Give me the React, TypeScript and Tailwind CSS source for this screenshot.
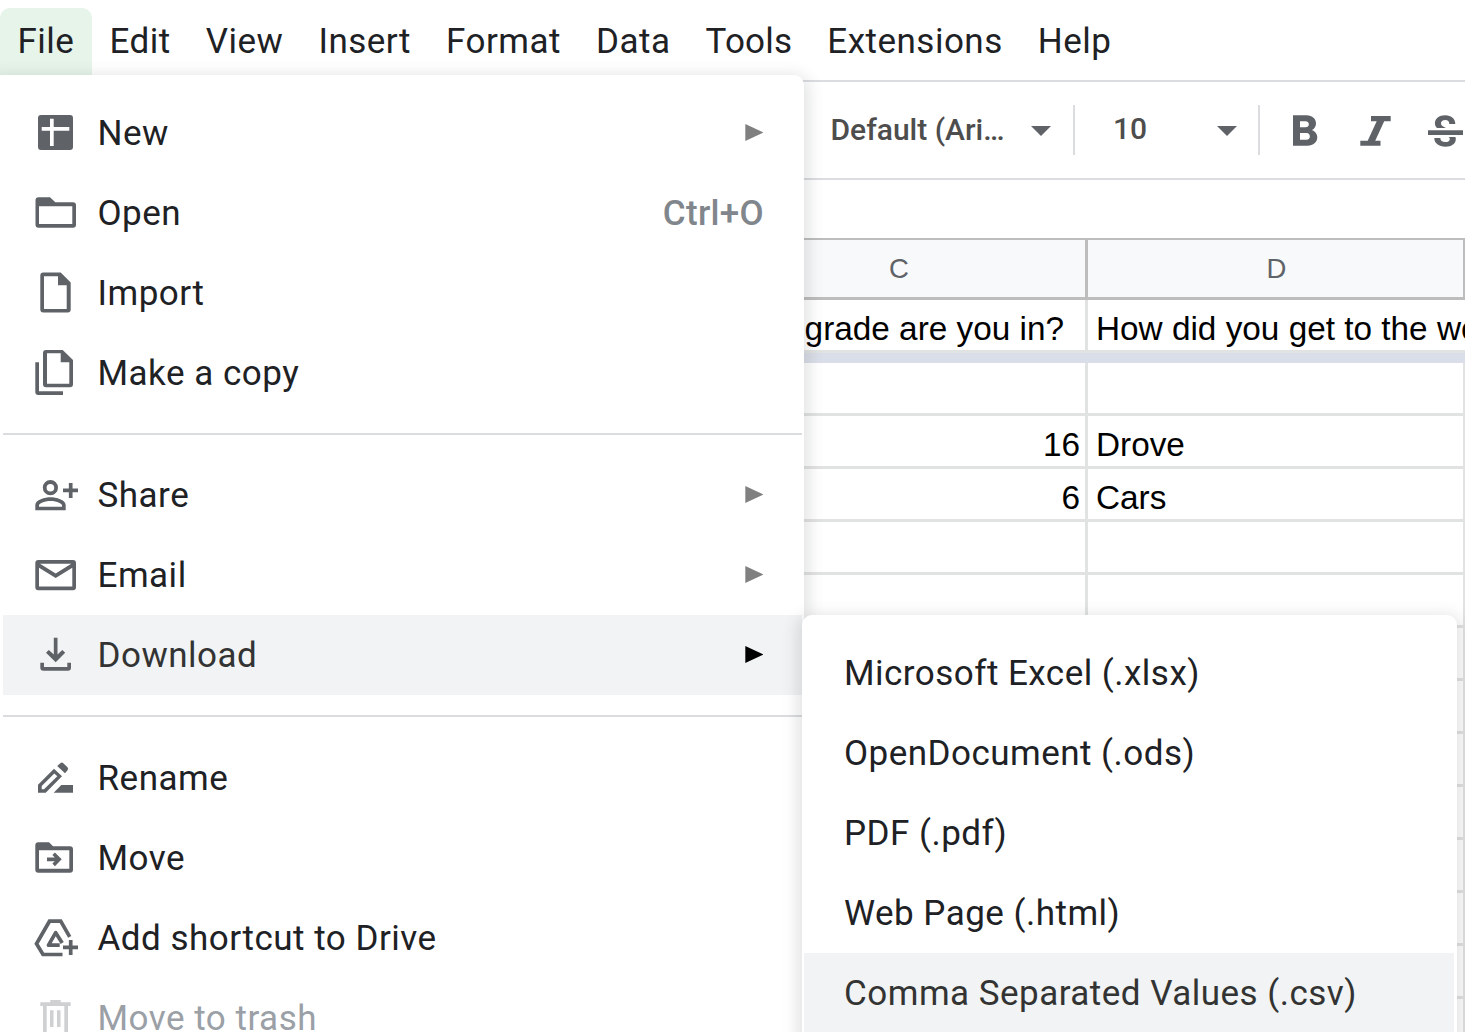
import React from "react";

const INK = "#5f6368";

type IconProps = { children: React.ReactNode; color?: string };

function Icon({ children, color = INK }: IconProps) {
  return (
    <svg width="48" height="48" viewBox="0 0 48 48" fill={color} stroke="none" className="shrink-0">
      {children}
    </svg>
  );
}

const icons = {
  sheet: (
    <Icon>
      <path fillRule="evenodd" d="M9 6H38a3 3 0 0 1 3 3V38a3 3 0 0 1-3 3H9a3 3 0 0 1-3-3V9a3 3 0 0 1 3-3zM18 9.7V18H9.7v3.7H18V37h3.7V21.7H37.3V18H21.7V9.7z" />
    </Icon>
  ),
  folder: (
    <Icon>
      <path fillRule="evenodd" d="M6.5 8.3H18L23.3 13.3H41a3 3 0 0 1 3 3V35.7a3 3 0 0 1-3 3H6.5a3 3 0 0 1-3-3V11.3a3 3 0 0 1 3-3zM7 17.3V35H40.3V17.3z" />
    </Icon>
  ),
  file: (
    <Icon>
      <path fillRule="evenodd" d="M11.3 3.6H28.7L38.7 13.6V40.6a3 3 0 0 1-3 3H11.3a3 3 0 0 1-3-3V6.6a3 3 0 0 1 3-3zM12 7.3V40H34.7V16.3H26V7.3z" />
    </Icon>
  ),
  copy: (
    <Icon>
      <path fillRule="evenodd" d="M14 1H30.7L41 11V35.3a3 3 0 0 1-3 3H14a3 3 0 0 1-3-3V4a3 3 0 0 1 3-3zM15 4.3V34.7H37.3V13.3H28.7V4.3z" />
      <path d="M3.3 13.3H7V42.3H31V46H6.3a3 3 0 0 1-3-3z" />
    </Icon>
  ),
  share: (
    <Icon>
      <circle cx="18.4" cy="16.7" r="5.7" fill="none" stroke={INK} strokeWidth="3.8" />
      <path fillRule="evenodd" d="M3.3 39.3V34C3.3 28.8 13 26.3 18.5 26.3S33.7 28.8 33.7 34V39.3zM7 35.7H30V34.3C30 32 23 30 18.5 30S7 32 7 34.3z" />
      <path d="M31 19.3H46M38.7 12V27" stroke={INK} strokeWidth="3.7" />
    </Icon>
  ),
  mail: (
    <Icon>
      <path fillRule="evenodd" d="M6.3 9H41a3 3 0 0 1 3 3V36.3a3 3 0 0 1-3 3H6.3a3 3 0 0 1-3-3V12a3 3 0 0 1 3-3zM7 16.8V35.6H40.3V16.8L23.7 27zM8 12.7L23.7 22.6L39.3 12.7z" />
    </Icon>
  ),
  download: (
    <Icon>
      <path d="M21.8 6.7H25.5V23.5L30.3 19L33.2 21.8L23.7 31.2L14 21.8L16.8 19L21.8 23.5z" />
      <path d="M8.3 31.7H12V36H35.3V31.7H39V36.7a3 3 0 0 1-3 3H11.3a3 3 0 0 1-3-3z" />
    </Icon>
  ),
  rename: (
    <Icon>
      <path fillRule="evenodd" d="M6 38.7V30.7L22 14.7L30 22.3L13.7 38.7zM9.7 35.3H12L25.3 22.3L22.3 19.5L9.7 32.1z" />
      <path d="M25.2 12L28.3 9.2Q29.8 8 31.3 9.2L35.5 13.3Q36.8 14.7 35.5 16.2L33 19.3z" />
      <path d="M21.7 38.7L29.3 31H41V38.7z" />
    </Icon>
  ),
  move: (
    <Icon>
      <path fillRule="evenodd" d="M6.3 8.3H17L21 12.3H38a3 3 0 0 1 3 3V35.7a3 3 0 0 1-3 3H6.3a3 3 0 0 1-3-3V11.3a3 3 0 0 1 3-3zM7 16.3V34.7H37.3V16.3z" />
      <path d="M15 23.5H22.8L20.4 21.1L22.9 18.4L29.7 25.3L22.9 32.2L20.4 29.6L22.8 27.2H15z" />
    </Icon>
  ),
  drive: (
    <Icon>
      <g fill="none" stroke={INK} strokeWidth="3.7">
        <path d="M30.5 40.5H11L4.5 29.7L17.5 7.2H28.7L37.7 22.8" />
        <path d="M27.7 31.2H16.5L23.7 18.7L30.2 29" strokeLinejoin="round" />
        <path d="M31 33.3H46M38.7 26V41" />
      </g>
    </Icon>
  ),
  trash: (
    <Icon color="#cfd0d2">
      <path fillRule="evenodd" d="M18.3 6H28.7V8.3H38.7V12H36V42H11V12H8.3V8.3H18.3zM14.7 12V38.5H32.3V12z" />
      <path d="M18 16.3H21.5V33H18zM25 16.3H28.5V33H25z" />
    </Icon>
  ),
};

function Row({ icon, label, shortcut, arrow, active, disabled }: {
  icon: React.ReactNode; label: string; shortcut?: string; arrow?: boolean; active?: boolean; disabled?: boolean;
}) {
  return (
    <div className={`ml-[3px] mr-0.5 flex h-20 items-center pl-[29px] pr-[39px] ${active ? "bg-[#f1f3f4] text-[#333]" : disabled ? "text-[#9aa0a6]" : "text-[#202124]"}`}>
      {icon}
      <span className="ml-[17.5px] flex-1 whitespace-nowrap">{label}</span>
      {shortcut && <span className="-mr-px font-medium tracking-[0.3px] text-[#80868b]">{shortcut}</span>}
      {arrow && (
        <svg width="18" height="18" viewBox="0 0 18 18" fill={active ? "#000" : "#808080"} className="-translate-y-[0.5px]">
          <path d="M.3 .5L18.300 9L.3 17.500z" />
        </svg>
      )}
    </div>
  );
}

function Caret() {
  return (
    <svg width="20" height="10" viewBox="0 0 20 10" fill={INK} className="mt-0.5 shrink-0">
      <path d="M0 0H20L10 10z" />
    </svg>
  );
}

function SheetRow({ c, d }: { c?: string; d?: string }) {
  return (
    <div className="flex h-[53px] shrink-0 border-b-[3px] border-[#e1e3e2]">
      <div className="w-[1088px] shrink-0 border-r-[3px] border-[#e1e3e2] pr-[5px] pt-[7px] text-right">{c}</div>
      <div className="w-[378px] shrink-0 border-r-[3px] border-[#e1e3e2] pl-2 pt-[7px]">{d}</div>
    </div>
  );
}

const menus = ["Edit", "View", "Insert", "Format", "Data"];
const formats = ["Microsoft Excel (.xlsx)", "OpenDocument (.ods)", "PDF (.pdf)", "Web Page (.html)"];

export default function App() {
  return (
    <div className="relative flex h-[1032px] w-[1465px] flex-col overflow-hidden bg-white font-[Roboto,sans-serif]">
      <nav className="flex h-20 shrink-0 pt-2 text-[35px] leading-[68px] tracking-[0.5px] text-[#202124]">
        <div className="rounded-t-[10px] bg-[#e6f4ea] px-[17.5px]">File</div>
        {menus.map((m) => (
          <div key={m} className="px-[17.5px]">{m}</div>
        ))}
        <div className="px-[17.5px] tracking-[0.2px]">Tools</div>
        <div className="px-[17.5px]">Extensions</div>
        <div className="px-[17.5px]">Help</div>
      </nav>
      <div className="flex h-[100px] shrink-0 items-center border-y-2 border-[#dadce0] pl-[830.5px] text-[30px] font-medium text-[#4d4d4d]">
        <span className="mb-0.5 w-[200px] whitespace-nowrap">Default (Ari…</span>
        <Caret />
        <div className="ml-[22.5px] h-[50px] w-0.5 bg-[#dadce0]" />
        <span className="mb-1 ml-[38px] w-[104px]">10</span>
        <Caret />
        <div className="ml-[21px] h-[50px] w-0.5 bg-[#dadce0]" />
        <svg width="205" height="40" viewBox="1260 110 205 40" fill={INK} className="shrink-0">
          <path fillRule="evenodd" d="M1293 115.3H1306.5C1312.5 115.3 1316 119 1316 123.4C1316 126.3 1314.5 128.6 1312 130C1315.300 131.300 1317.300 134 1317.300 137.300C1317.300 142.300 1313.300 145.700 1307.500 145.700H1293zM1300 121.200V127.300H1305.500C1310 127.300 1310 121.200 1305.500 121.200zM1300 133V139.800H1306.500C1311 139.800 1311 133 1306.500 133z" />
          <path d="M1371 116H1390.700V121.200H1384.200L1375.200 140.800H1380.500V145.700H1360.300V140.800H1367.700L1376.700 121.200H1371z" />
          <path d="M1428 130.300H1463V135H1428z" />
          <path d="M1434.900 123.500C1434.900 118.500 1439 115.300 1445.300 115.300C1451.500 115.300 1455.300 118.800 1455.300 124H1449.300C1449.300 121.500 1448 120 1445.300 120C1442.500 120 1441 121.400 1441 123.500C1441 125.300 1442.300 126.500 1446 127.900H1437C1435.700 126.700 1434.900 125.300 1434.900 123.500z" />
          <path d="M1434.300 138H1440.300C1440.300 140.700 1442.200 142 1445.300 142C1448.300 142 1449.800 140.800 1449.800 138.900C1449.800 138 1449.500 137.400 1448.500 136.900H1455.400C1455.700 137.600 1455.800 138.300 1455.800 139C1455.800 143.700 1451.800 146.700 1445.500 146.700C1438.800 146.700 1434.300 143.400 1434.300 138z" />
        </svg>
      </div>
      <div className="h-[58px] shrink-0" />
      <div className="flex h-[62px] shrink-0 border-b-[3px] border-t-2 border-[#bdbdbd] bg-[#f8f9fa] text-center font-['Liberation_Sans',Arial,sans-serif] text-[27.5px] leading-[57px] text-[#5f6368]">
        <div className="w-[1088px] shrink-0 border-r-[3px] border-[#bdbdbd] pl-[713px]">C</div>
        <div className="w-[378px] shrink-0 border-r-[3px] border-[#bdbdbd] pl-0.5">D</div>
      </div>
      <div className="flex flex-col whitespace-nowrap font-['Liberation_Sans',Arial,sans-serif] text-[33.33px] leading-[44px] text-black">
        <div className="flex h-[53px] shrink-0 border-b-[3px] border-[#e1e3e2]">
          <div className="w-[1088px] shrink-0 border-r-[3px] border-[#e1e3e2] pr-[21px] pt-[7px] text-right">What grade are you in?</div>
          <div className="w-[378px] shrink-0 pl-2 pt-[7px]">How did you get to the wo</div>
        </div>
        <div className="h-2.5 shrink-0 bg-[#dadee8]" />
        <SheetRow />
        <SheetRow c="16" d="Drove" />
        <SheetRow c="6" d="Cars" />
        {Array.from({ length: 10 }, (_, i) => (
          <SheetRow key={i} />
        ))}
      </div>

      <div className="absolute -left-2 top-[75px] h-[1000px] w-[812px] rounded-[10px] bg-white pl-2 pt-[18px] text-[35px] leading-none tracking-[0.5px] shadow-[0_5px_15px_5px_rgba(60,64,67,0.15)]">
        <Row icon={icons.sheet} label="New" arrow />
        <Row icon={icons.folder} label="Open" shortcut="Ctrl+O" />
        <Row icon={icons.file} label="Import" />
        <Row icon={icons.copy} label="Make a copy" />
        <div className="mb-5 ml-[3px] mr-0.5 mt-5 h-0.5 bg-[#dadce0]" />
        <Row icon={icons.share} label="Share" arrow />
        <Row icon={icons.mail} label="Email" arrow />
        <Row icon={icons.download} label="Download" arrow active />
        <div className="mb-[21px] ml-[3px] mr-0.5 mt-5 h-0.5 bg-[#dadce0]" />
        <Row icon={icons.rename} label="Rename" />
        <Row icon={icons.move} label="Move" />
        <Row icon={icons.drive} label="Add shortcut to Drive" />
        <Row icon={icons.trash} label="Move to trash" disabled />
      </div>

      <div className="absolute left-[802px] top-[615px] h-[500px] w-[655px] rounded-[10px] bg-white pt-[18px] text-[35px] leading-[82px] tracking-[0.48px] text-[#202124] shadow-[0_5px_15px_5px_rgba(60,64,67,0.15)]">
        {formats.map((f) => (
          <div key={f} className="h-20 pl-[42px]">{f}</div>
        ))}
        <div className="ml-0.5 mr-[3px] h-20 bg-[#f1f3f4] pl-10 text-[#333]">Comma Separated Values (.csv)</div>
      </div>
    </div>
  );
}
